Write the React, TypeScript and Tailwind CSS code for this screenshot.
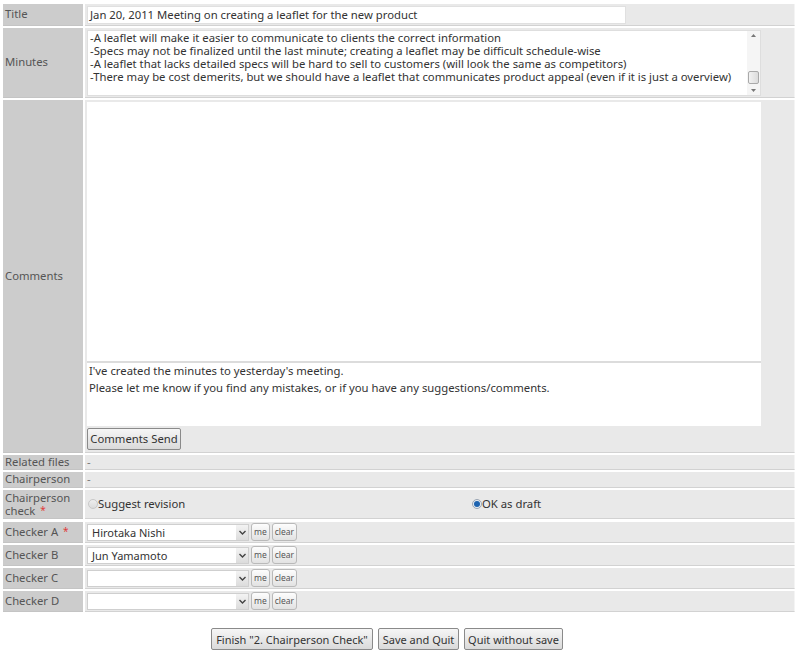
import React from "react";

const font = { fontFamily: '"Noto Sans", "DejaVu Sans", sans-serif' };

function Label({ children, h }: { children: React.ReactNode; h: string }) {
  return (
    <div className={`w-[80px] shrink-0 bg-[#cccccc] border-b border-[#c4c4c4] pl-[2px] flex items-center text-[#555] ${h}`}>
      {children}
    </div>
  );
}

function Row({ label, h, children, valueClass = "" }: { label: React.ReactNode; h: string; children?: React.ReactNode; valueClass?: string }) {
  return (
    <div className="flex gap-[2px]">
      <Label h={h}>{label}</Label>
      <div className={`flex-1 bg-[#e9e9e9] border-b border-[#d2d2d2] border-r border-r-[#f4f4f4] ${h} ${valueClass}`}>{children}</div>
    </div>
  );
}

function SmallBtn({ children }: { children: React.ReactNode }) {
  return (
    <button className="h-[18px] px-[2px] rounded-[3px] border border-[#b9b9b9] bg-gradient-to-b from-[#fdfdfd] to-[#e2e2e2] text-[8.5px] text-[#555] leading-none">
      {children}
    </button>
  );
}

function Select({ value }: { value: string }) {
  return (
    <div className="w-[162px] h-[17px] border border-[#cfcfcf] bg-white flex">
      <div className="flex-1 pl-[4px] text-[11px] text-[#333] leading-[15px]">{value}</div>
      <div className="w-[12px] bg-gradient-to-b from-[#f3f3f3] to-[#dcdcdc] flex items-center justify-center">
        <svg width="7" height="5" viewBox="0 0 7 5">
          <path d="M0.5 1 L3.5 4 L6.5 1" stroke="#444" strokeWidth="1.4" fill="none" />
        </svg>
      </div>
    </div>
  );
}

function CheckerRow({ label, value }: { label: React.ReactNode; value: string }) {
  return (
    <Row label={label} h="h-[21px]" valueClass="flex items-center pl-[2px] gap-[2px]">
      <Select value={value} />
      <SmallBtn>me</SmallBtn>
      <SmallBtn>clear</SmallBtn>
    </Row>
  );
}

function BigBtn({ children, w }: { children: React.ReactNode; w: string }) {
  return (
    <button className={`h-[22px] ${w} rounded-[2px] border border-[#8a8a8a] bg-gradient-to-b from-[#f6f6f6] to-[#dadada] text-[11px] text-[#333] leading-none whitespace-nowrap`}>
      {children}
    </button>
  );
}

const Star = () => <span className="text-[#e03a3a] text-[10px] align-top ml-[2px]">*</span>;

export default function App() {
  return (
    <div className="w-[800px] h-[659px] bg-white text-[11.3px] text-[#333]" style={font}>
      <div className="pt-[4px] pl-[3px] pr-[5px] flex flex-col gap-[2px]">
        <Row label="Title" h="h-[22px]" valueClass="flex items-center pl-[2px]">
          <div className="w-[539px] h-[18px] bg-white border border-[#e0e0e0] pl-[2px] leading-[15px]">
            Jan 20, 2011 Meeting on creating a leaflet for the new product
          </div>
        </Row>
        <Row label="Minutes" h="h-[70px]" valueClass="pl-[2px] pt-[2px]">
          <div className="w-[674px] h-[66px] bg-white border border-[#dedede] flex">
            <div className="flex-1 pl-[2px] leading-[13px]">
              <div>-A leaflet will make it easier to communicate to clients the correct information</div>
              <div>-Specs may not be finalized until the last minute; creating a leaflet may be difficult schedule-wise</div>
              <div>-A leaflet that lacks detailed specs will be hard to sell to customers (will look the same as competitors)</div>
              <div>-There may be cost demerits, but we should have a leaflet that communicates product appeal (even if it is just a overview)</div>
            </div>
            <div className="w-[13px] bg-[#f5f5f5] flex flex-col items-center justify-between py-[3px]">
              <svg width="5" height="3" viewBox="0 0 5 3"><path d="M0 3 L2.5 0 L5 3Z" fill="#777" /></svg>
              <div className="flex-1 w-full flex flex-col justify-end pb-[5px]">
                <div className="h-[13px] mx-[1px] rounded-[2px] border border-[#a9a9a9] bg-gradient-to-r from-[#f2f2f2] to-[#dcdcdc]" />
              </div>
              <svg width="5" height="3" viewBox="0 0 5 3"><path d="M0 0 L2.5 3 L5 0Z" fill="#777" /></svg>
            </div>
          </div>
        </Row>
        <Row label="Comments" h="h-[353px]" valueClass="pl-[2px] pt-[2px]">
          <div className="w-[674px] h-[261px] bg-white border-b-[2px] border-[#dcdcdc]" />
          <div className="w-[674px] h-[63px] bg-white pl-[2px] leading-[16px]">
            <div>I've created the minutes to yesterday's meeting.</div>
            <div className="mt-[1px]">Please let me know if you find any mistakes, or if you have any suggestions/comments.</div>
          </div>
          <div className="mt-[2px]">
            <button className="h-[22px] w-[94px] rounded-[2px] border border-[#8a8a8a] bg-gradient-to-b from-[#f6f6f6] to-[#dadada] text-[11.3px] text-[#333] leading-none">
              Comments Send
            </button>
          </div>
        </Row>
        <Row label="Related files" h="h-[15px]" valueClass="flex items-center pl-[2px] text-[#777]">-</Row>
        <Row label="Chairperson" h="h-[16px]" valueClass="flex items-center pl-[2px] text-[#777]">-</Row>
        <Row
          label={
            <span className="leading-[13px]">
              Chairperson
              <br />
              check <Star />
            </span>
          }
          h="h-[29px]"
          valueClass="flex items-center pl-[3px]"
        >
          <div className="w-[384px] flex items-center">
            <span className="w-[10px] h-[10px] rounded-full border border-[#c8c8c8] bg-gradient-to-b from-[#eee] to-[#dcdcdc]" />
            <span>Suggest revision</span>
          </div>
          <div className="flex items-center">
            <span className="w-[10px] h-[10px] rounded-full border border-[#9aa5b3] bg-[#e6ecf2] flex items-center justify-center">
              <span className="w-[6px] h-[6px] rounded-full bg-[#1d63b0]" />
            </span>
            <span>OK as draft</span>
          </div>
        </Row>
        <div className="flex flex-col gap-[2px] pt-[1px]">
          <CheckerRow label={<span>Checker A <Star /></span>} value="Hirotaka Nishi" />
          <CheckerRow label="Checker B" value="Jun Yamamoto" />
          <CheckerRow label="Checker C" value="" />
          <CheckerRow label="Checker D" value="" />
        </div>
      </div>
      <div className="flex gap-[5px] pl-[211px] mt-[16px]">
        <BigBtn w="w-[162px]">Finish "2. Chairperson Check"</BigBtn>
        <BigBtn w="w-[81px]">Save and Quit</BigBtn>
        <BigBtn w="w-[99px]">Quit without save</BigBtn>
      </div>
    </div>
  );
}
